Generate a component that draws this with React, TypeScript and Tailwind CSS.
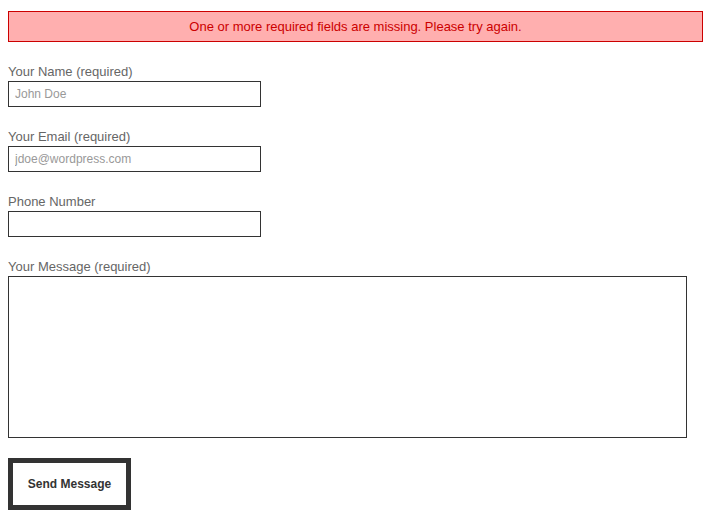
export default function App() {
  const font = { fontFamily: '"Liberation Sans", Arial, sans-serif' }
  const inputCls =
    "block w-[253px] h-[26px] border border-[#333] px-[6px] text-[12px] text-[#333] placeholder:text-[#999] outline-none bg-white"

  return (
    <div className="min-h-[523px] bg-white px-[8px] pt-[11px]" style={font}>
      <div className="w-[695px] h-[31px] border border-[#cc0000] bg-[#ffafaf] text-[#cc0000] text-[13px] flex items-center justify-center">
        One or more required fields are missing. Please try again.
      </div>

      <form className="mt-[21px]" onSubmit={(e) => e.preventDefault()}>
        <label className="block mb-[21px] text-[13px] text-[#666]">
          <span className="block h-[18px] leading-[18px]">Your Name (required)</span>
          <input className={inputCls} placeholder="John Doe" />
        </label>

        <label className="block mb-[21px] text-[13px] text-[#666]">
          <span className="block h-[18px] leading-[18px]">Your Email (required)</span>
          <input className={inputCls} placeholder="jdoe@wordpress.com" />
        </label>

        <label className="block mb-[21px] text-[13px] text-[#666]">
          <span className="block h-[18px] leading-[18px]">Phone Number</span>
          <input className={inputCls} />
        </label>

        <label className="block mb-[20px] text-[13px] text-[#666]">
          <span className="block h-[18px] leading-[18px]">Your Message (required)</span>
          <textarea className="block w-[679px] h-[162px] border border-[#333] resize-none outline-none bg-white" />
        </label>

        <button
          type="submit"
          className="block w-[123px] h-[52px] border-[5px] border-[#333] bg-white text-[12px] font-bold text-[#333]"
        >
          Send Message
        </button>
      </form>
    </div>
  )
}
